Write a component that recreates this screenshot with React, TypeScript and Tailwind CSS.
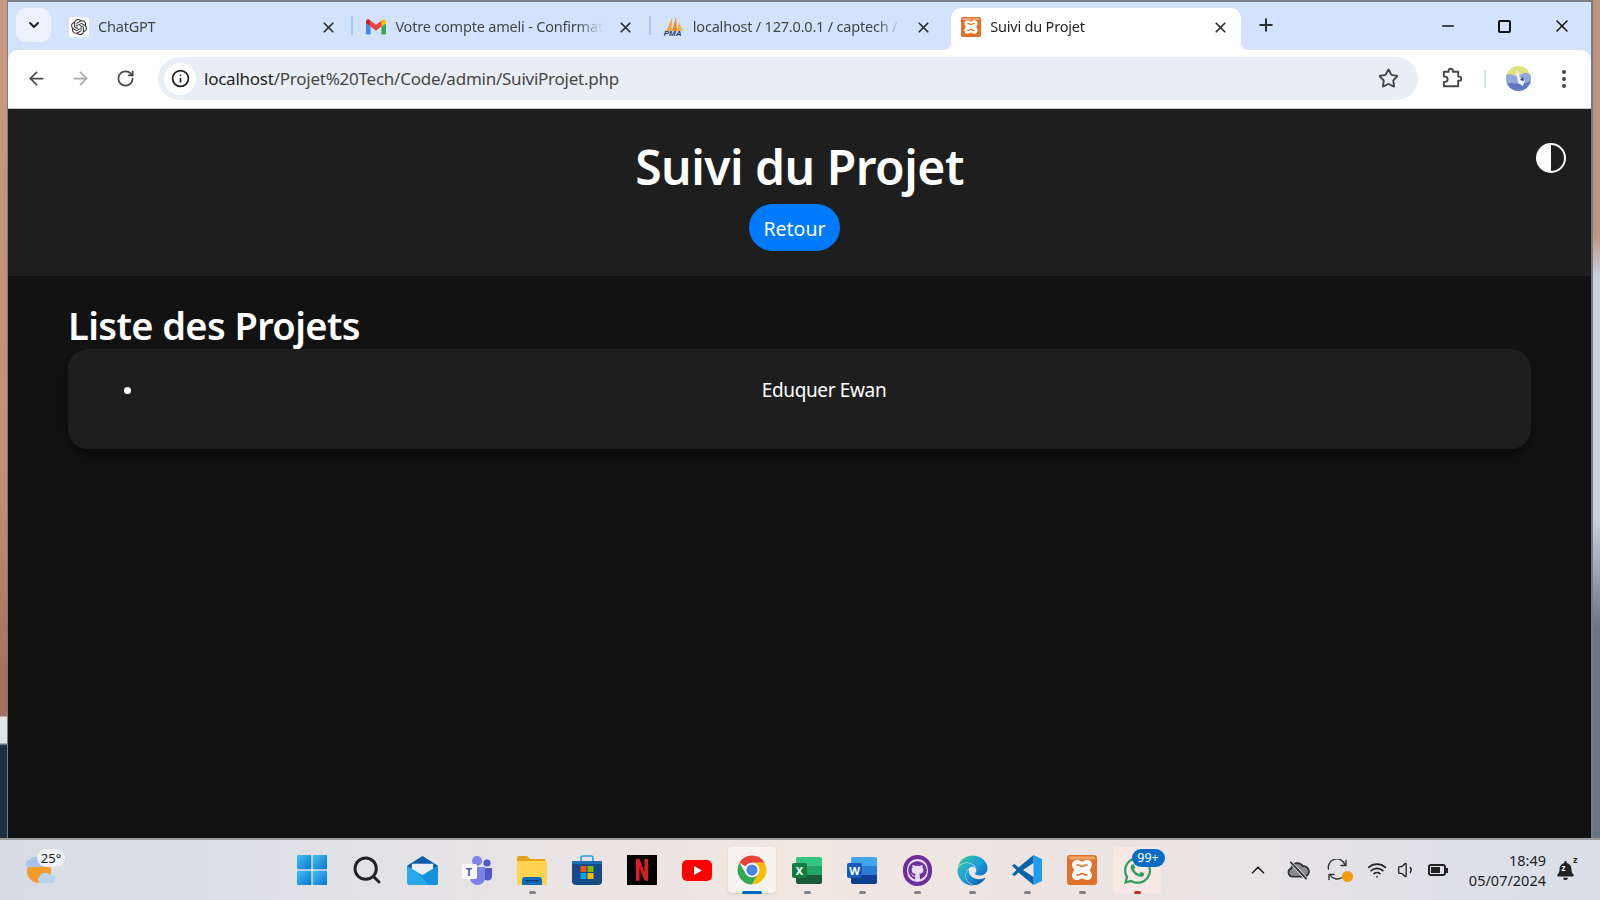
import React from "react";
import { ArrowLeft, ArrowRight, RotateCw, X, Plus, Info, Star, ChevronDown, ChevronUp, Minus, Search, Wifi, Volume1 } from "lucide-react";
import { SiOpenai } from "react-icons/si";
import { FaGithub, FaWhatsapp, FaBell, FaEdge } from "react-icons/fa";

const font = "font-['Noto_Sans',sans-serif]";

function Gmail() {
  return (
    <svg viewBox="0 0 24 18" className="w-[20px] h-[16px]">
      <path d="M1.6 18H5.5V8.5L0 4.4V16.4C0 17.3 .7 18 1.6 18Z" fill="#4285f4" />
      <path d="M18.5 18H22.4C23.3 18 24 17.3 24 16.4V4.4L18.5 8.5Z" fill="#34a853" />
      <path d="M18.5 1.4V8.5L24 4.4V2.2C24 .2 21.7-1 20.1.2Z" fill="#fbbc04" />
      <path d="M5.5 8.5V1.4L12 6.3 18.5 1.4V8.5L12 13.4Z" fill="#ea4335" />
      <path d="M0 2.2V4.4L5.5 8.5V1.4L3.9.2C2.3-1 0 .2 0 2.2Z" fill="#c5221f" />
    </svg>
  );
}

function Pma() {
  return (
    <div className="relative w-[20px] h-[20px]">
      <svg viewBox="0 0 20 15" className="w-[20px] h-[15px]">
        <path d="M2 14 8 1 7.5 14Z" fill="#f6a63a" />
        <path d="M8 14 12 0 13 14Z" fill="#ef8a1f" />
        <path d="M13 14 15 5 19 14Z" fill="#f5b45c" />
      </svg>
      <span className="absolute left-0 bottom-[-1px] text-[8px] leading-[8px] font-bold italic text-[#1b3a6b] font-['Liberation_Sans',sans-serif]">PMA</span>
    </div>
  );
}

function Xampp({ size }: { size: string }) {
  return (
    <svg viewBox="0 0 30 30" className={size}>
      <rect width="30" height="30" rx="3" fill="#e0702a" />
      <rect x="2" y="1.5" width="26" height="3" rx="1" fill="#f5a368" />
      <path d="M5 9.5A5 5 0 0 1 10 5C12.5 5 13.6 6.4 15 6.8 16.4 6.4 17.5 5 20 5A5 5 0 0 1 25 9.5C25 11.8 23.6 13.4 22.8 15 23.6 16.6 25 18.2 25 20.5A5 5 0 0 1 20 25C17.5 25 16.4 23.6 15 23.2 13.6 23.6 12.5 25 10 25A5 5 0 0 1 5 20.5C5 18.2 6.4 16.6 7.2 15 6.4 13.4 5 11.8 5 9.5Z" fill="#fff" />
      <path d="M10 10H11.5C13 10 13.5 11.5 15 11.5 16.5 11.5 17 10 18.5 10H20" fill="none" stroke="#e0702a" strokeWidth="1.7" strokeLinecap="round" />
      <path d="M10 20H11.5C13 20 13.5 18.5 15 18.5 16.5 18.5 17 20 18.5 20H20" fill="none" stroke="#e0702a" strokeWidth="1.7" strokeLinecap="round" />
    </svg>
  );
}

function Tab({ icon, title, active, sep }: { icon: React.ReactNode; title: string; active?: boolean; sep?: boolean }) {
  return (
    <div className="w-[297.4px] h-full flex items-end shrink-0">
      <div className={`w-[2px] h-[19px] mb-[15px] ${sep ? "bg-[#a8c7fa]" : ""}`} />
      <div className={`relative ml-[3px] w-[290px] h-[42px] flex items-center pl-[10px] rounded-t-[10px] pb-[4px] ${active ? "bg-white" : ""}`}>
        {active && (
          <svg viewBox="0 0 8 8" className="absolute bottom-0 left-[-8px] w-[8px] h-[8px]"><path d="M8 0V8H0C5 8 8 5 8 0Z" fill="#fff" /></svg>
        )}
        {active && (
          <svg viewBox="0 0 8 8" className="absolute bottom-0 right-[-8px] w-[8px] h-[8px]"><path d="M0 0V8H8C3 8 0 5 0 0Z" fill="#fff" /></svg>
        )}
        <div className="w-[20px] h-[20px] flex items-center justify-center shrink-0">{icon}</div>
        <div className={`ml-[9px] w-[208px] whitespace-nowrap overflow-hidden text-[14.5px] tracking-[-0.2px] [mask-image:linear-gradient(to_right,black_88%,transparent)] ${active ? "text-[#1f1f1f]" : "text-[#444746]"}`}>
          {title}
        </div>
        <X className="ml-[14px] w-[17px] h-[17px] text-[#2b2f33] shrink-0" strokeWidth={2.4} />
      </div>
    </div>
  );
}

function Puzzle() {
  return (
    <svg viewBox="0 0 24 24" className="w-[23px] h-[23px]" fill="none" stroke="#474747" strokeWidth="2" strokeLinejoin="round">
      <path d="M4 5H9V4A2.2 2.2 0 0 1 13.4 4V5H19V10H20A2.2 2.2 0 0 1 20 14.4H19V20H4V15.5H5.2A2.7 2.7 0 0 0 5.2 10H4Z" />
    </svg>
  );
}

function Chrome() {
  return (
    <svg viewBox="0 0 48 48" className="w-[30px] h-[30px]">
      <circle cx="24" cy="24" r="23" fill="#fff" />
      <path d="M24 1A23 23 0 0 1 44 12.5H24A11.5 11.5 0 0 0 13.9 18.3L4 12.5A23 23 0 0 1 24 1Z" fill="#ea4335" />
      <path d="M44 12.5A23 23 0 0 1 24 47L34 29.7A11.5 11.5 0 0 0 34 18.2 11.5 11.5 0 0 0 24 12.5Z" fill="#fbbc04" />
      <path d="M24 47A23 23 0 0 1 4 12.5L14 29.7A11.5 11.5 0 0 0 34 29.7Z" fill="#34a853" />
      <circle cx="24" cy="24" r="11.5" fill="#fff" />
      <circle cx="24" cy="24" r="9" fill="#4a86e8" />
    </svg>
  );
}

function Start() {
  return (
    <svg viewBox="0 0 30 30" className="w-[30px] h-[30px]">
      <defs>
        <linearGradient id="st" x1="0" y1="0" x2="1" y2="1"><stop offset="0" stopColor="#3fc3f5" /><stop offset="1" stopColor="#0a73cf" /></linearGradient>
      </defs>
      <rect x="0" y="0" width="14.3" height="14.3" rx="1" fill="url(#st)" />
      <rect x="15.7" y="0" width="14.3" height="14.3" rx="1" fill="url(#st)" />
      <rect x="0" y="15.7" width="14.3" height="14.3" rx="1" fill="url(#st)" />
      <rect x="15.7" y="15.7" width="14.3" height="14.3" rx="1" fill="url(#st)" />
    </svg>
  );
}

function Mail() {
  return (
    <svg viewBox="0 0 32 30" className="w-[31px] h-[29px]">
      <path d="M0 10 16 0 32 10V13H0Z" fill="#0b5cab" />
      <path d="M5 8H27V20H5Z" fill="#e8eef3" />
      <path d="M0 10 16 20 32 10V28A2 2 0 0 1 30 30H2A2 2 0 0 1 0 28Z" fill="#28a8ea" />
      <path d="M32 10V28A2 2 0 0 1 30 30H22L12 17.5 16 20Z" fill="#1490df" />
    </svg>
  );
}

function Teams() {
  return (
    <div className="relative w-[31px] h-[30px]">
      <svg viewBox="0 0 31 30" className="w-[31px] h-[30px]">
        <circle cx="15" cy="6" r="5" fill="#7b83eb" />
        <circle cx="25" cy="8" r="3.6" fill="#5059c9" />
        <path d="M21 13H30V21A4.5 4.5 0 0 1 21 21Z" fill="#5059c9" />
        <path d="M8 12H23V23A7.5 7 0 0 1 8 23Z" fill="#7b83eb" />
      </svg>
      <div className="absolute left-0 top-[9px] w-[15px] h-[15px] bg-white rounded-[2px] flex items-center justify-center text-[11px] font-bold text-[#4b53bc] leading-none">T</div>
    </div>
  );
}

function Files() {
  return (
    <svg viewBox="0 0 30 29" className="w-[30px] h-[29px]">
      <path d="M0 2A2 2 0 0 1 2 0H10L13 3H28V8H0Z" fill="#e0a31a" />
      <path d="M0 5H30V27A2 2 0 0 1 28 29H2A2 2 0 0 1 0 27Z" fill="#ffd34e" />
      <path d="M5 29V24A3 3 0 0 1 8 21H22A3 3 0 0 1 25 24V29Z" fill="#0f6cbd" />
      <rect x="8" y="24" width="14" height="1.5" fill="#0b3d73" />
    </svg>
  );
}

function Store() {
  return (
    <svg viewBox="0 0 30 30" className="w-[30px] h-[30px]">
      <path d="M9 6V3A2 2 0 0 1 11 1H19A2 2 0 0 1 21 3V6" fill="none" stroke="#27a0e0" strokeWidth="1.6" />
      <path d="M0 6H30V26A4 4 0 0 1 26 30H4A4 4 0 0 1 0 26Z" fill="#144a85" />
      <path d="M0 6H30V9H0Z" fill="#1b6fb5" />
      <rect x="8.5" y="11" width="6" height="6" fill="#f25022" />
      <rect x="15.5" y="11" width="6" height="6" fill="#7fba00" />
      <rect x="8.5" y="18" width="6" height="6" fill="#00a4ef" />
      <rect x="15.5" y="18" width="6" height="6" fill="#ffb900" />
    </svg>
  );
}

function Netflix() {
  return (
    <div className="w-[30px] h-[30px] bg-black flex items-center justify-center">
      <svg viewBox="0 0 12 22" className="w-[12px] h-[22px]">
        <path d="M0 0H3.6L8.4 13V0H12V22L8.4 21.4 3.6 9V21.6L0 22Z" fill="#d81f26" />
      </svg>
    </div>
  );
}

function Youtube() {
  return (
    <svg viewBox="0 0 30 21" className="w-[30px] h-[21px]">
      <rect width="30" height="21" rx="5" fill="#ff0000" />
      <path d="M12 6 20 10.5 12 15Z" fill="#fff" />
    </svg>
  );
}

function Office({ letter, dark, top, mid, low }: { letter: string; dark: string; top: string; mid: string; low: string }) {
  return (
    <div className="relative w-[30px] h-[27px] pl-[4px]">
      <div className="w-[26px] h-[27px] rounded-[2px] overflow-hidden flex flex-col">
        <div className={`flex-1 ${top}`} />
        <div className={`flex-1 ${mid}`} />
        <div className={`flex-1 ${low}`} />
      </div>
      <div className={`absolute left-0 top-[6px] w-[15px] h-[15px] rounded-[2px] flex items-center justify-center text-white text-[11px] font-bold leading-none ${dark}`}>{letter}</div>
    </div>
  );
}

function Github() {
  return (
    <div className="w-[29px] h-[31px] rounded-full bg-[#6e2f9e] flex items-center justify-center">
      <div className="w-[21px] h-[23px] rounded-full bg-[#eadcf2] flex items-center justify-center">
        <FaGithub className="w-[19px] h-[19px] text-[#6e2f9e]" />
      </div>
    </div>
  );
}

function Vscode() {
  return (
    <svg viewBox="0 0 30 30" className="w-[30px] h-[30px]">
      <path d="M21.5 0 30 4V26L21.5 30Z" fill="#1f9cf0" />
      <path d="M21.5 0V8L11 15 21.5 22V30L6.5 17.5 2.5 21 0 19.5 4.5 15 0 10.5 2.5 9 6.5 12.5Z" fill="#0065a9" />
    </svg>
  );
}

function Weather() {
  return (
    <svg viewBox="0 0 30 28" className="w-[30px] h-[28px]">
      <circle cx="14" cy="15" r="12" fill="#f39a2b" />
      <path d="M2 11A4 4 0 0 1 5 4 6 6 0 0 1 15 3H17V11Z" fill="#a9c4e8" />
      <path d="M15 27A4 4 0 0 1 15 20 6 6 0 0 1 25 19 4 4 0 0 1 28 27Z" fill="#bcd3ef" />
    </svg>
  );
}

function CloudSlash() {
  return (
    <svg viewBox="0 0 24 20" className="w-[23px] h-[20px]" fill="none" stroke="#333" strokeWidth="1.9" strokeLinecap="round">
      <path d="M6 17A4.5 4.5 0 0 1 4.5 8.3 6.5 6.5 0 0 1 16.5 6 5.5 5.5 0 0 1 18 17Z" fill="#8a8d92" />
      <path d="M5 3 20 19" stroke="#dfe2e8" strokeWidth="3.5" />
      <path d="M4 2 20 19" />
    </svg>
  );
}

function Sync() {
  return (
    <div className="relative w-[22px] h-[22px]">
      <svg viewBox="0 0 22 22" className="w-[22px] h-[22px]" fill="none" stroke="#333" strokeWidth="1.4" strokeLinecap="round" strokeLinejoin="round">
        <path d="M1.5 10A8.5 8.5 0 0 1 18 6" />
        <path d="M19 1.5V6.5H14" />
        <path d="M15 18.5A8.5 8.5 0 0 1 3 16" />
        <path d="M2 20.5V15.5H7" />
      </svg>
      <div className="absolute right-[-4px] bottom-[-1px] w-[11px] h-[11px] rounded-full bg-[#f59a0c]" />
    </div>
  );
}

function Cell({ children, bar, box }: { children: React.ReactNode; bar?: string; box?: string }) {
  return (
    <div className="relative w-[55px] h-full flex items-center justify-center shrink-0">
      {box && <div className={`absolute top-[7px] h-[46px] w-[48px] rounded-[4px] ${box}`} />}
      <div className="relative">{children}</div>
      {bar && <div className={`absolute bottom-[6px] h-[3px] rounded-full ${bar}`} />}
    </div>
  );
}

const DOT = "w-[7px] bg-[#80838a]";

export default function App() {
  return (
    <div className={`w-[1600px] h-[900px] flex flex-col overflow-hidden bg-[#c08c78] ${font}`}>
      <svg className="absolute w-0 h-0">
        <defs>
          <linearGradient id="edge" x1="0" y1="0" x2="1" y2="1">
            <stop offset="0" stopColor="#3ccf8e" />
            <stop offset="0.5" stopColor="#1b9de2" />
            <stop offset="1" stopColor="#0b4f9e" />
          </linearGradient>
        </defs>
      </svg>
      <div className="h-[838px] flex">
        <div className="w-[8px] border-r-[1px] border-[#7b7b7b] bg-[linear-gradient(180deg,#c89a84_0%,#c08c78_60%,#a8705f_80%,#a8705f_85.4%,#dfe3ea_85.6%,#dfe3ea_88.6%,#1d2f42_89%,#1d2f42_100%)]" />
        <div className="flex-1 flex flex-col min-w-0">
          {/* Tab strip */}
          <div className="h-[50px] bg-[#d3e3fd] border-t-[2px] border-[#7b7f85] flex pl-[8px] shrink-0">
            <div className="w-[35px] h-[34px] mt-[6px] rounded-[10px] bg-[#ecf3fe] flex items-center justify-center mr-[3px]">
              <ChevronDown className="w-[16px] h-[16px] text-[#1f1f1f]" strokeWidth={3} />
            </div>
            <Tab title="ChatGPT" icon={<div className="w-[20px] h-[20px] rounded-[3px] bg-white flex items-center justify-center"><SiOpenai className="w-[16px] h-[16px] text-[#333]" /></div>} />
            <Tab sep title="Votre compte ameli - Confirmat" icon={<Gmail />} />
            <Tab sep title="localhost / 127.0.0.1 / captech /" icon={<Pma />} />
            <Tab active title="Suivi du Projet" icon={<Xampp size="w-[20px] h-[20px]" />} />
            <div className="ml-[2px] w-[40px] h-[46px] flex items-center justify-center">
              <Plus className="w-[20px] h-[20px] text-[#2b2f33]" strokeWidth={2.4} />
            </div>
            <div className="ml-auto flex">
              <div className="w-[56px] h-[48px] flex items-center justify-center"><Minus className="w-[18px] h-[18px] text-[#111]" strokeWidth={2} /></div>
              <div className="w-[56px] h-[48px] flex items-center justify-center"><div className="w-[13px] h-[13px] rounded-[2px] border-[2px] border-[#111]" /></div>
              <div className="w-[59px] h-[48px] flex items-center justify-center"><X className="w-[20px] h-[20px] text-[#111]" strokeWidth={1.8} /></div>
            </div>
          </div>
          {/* Toolbar */}
          <div className="h-[59px] bg-[#d3e3fd] shrink-0">
            <div className="h-[59px] bg-white rounded-t-[10px] border-b-[1px] border-[#c7c7c7] flex items-center pb-[1px]">
              <div className="w-[44px] ml-[6px] flex justify-center"><ArrowLeft className="w-[21px] h-[21px] text-[#474747]" strokeWidth={2} /></div>
              <div className="w-[44px] flex justify-center"><ArrowRight className="w-[21px] h-[21px] text-[#a8abae]" strokeWidth={2} /></div>
              <div className="w-[44px] flex justify-center pl-[2px]"><RotateCw className="w-[19px] h-[19px] text-[#474747]" strokeWidth={2.2} /></div>
              <div className="ml-[12px] w-[1260px] h-[43px] rounded-full bg-[#e9eef6] flex items-center pl-[6px]">
                <div className="w-[32px] h-[32px] rounded-full bg-white flex items-center justify-center">
                  <Info className="w-[19px] h-[19px] text-[#1f1f1f]" strokeWidth={2.2} />
                </div>
                <div className="ml-[8px] text-[17px] tracking-[-0.24px] text-[#474747] whitespace-nowrap">
                  <span className="text-[#1f1f1f]">localhost</span>/Projet%20Tech/Code/admin/SuiviProjet.php
                </div>
                <div className="ml-auto mr-[19px]"><Star className="w-[21px] h-[21px] text-[#474747]" strokeWidth={2.2} /></div>
              </div>
              <div className="ml-[22px] w-[23px] flex justify-center"><Puzzle /></div>
              <div className="ml-[21px] w-[2px] h-[18px] bg-[#d3e3fd]" />
              <div className="ml-[20px] w-[25px] h-[25px] rounded-full overflow-hidden">
                <svg viewBox="0 0 25 25" className="w-[25px] h-[25px]">
                  <rect width="25" height="25" fill="#dfe37e" />
                  <path d="M0 9C6 6 9 12 14 9S22 7 25 9V25H0Z" fill="#8fa8dd" />
                  <path d="M0 18C6 15 12 21 25 15V25H0Z" fill="#5f78c4" />
                  <path d="M10 5 12 17 17 20 19 14 14 12 12 5Z" fill="#f0eef6" />
                  <path d="M14 14 17 11 18 15Z" fill="#3a3f6b" />
                </svg>
              </div>
              <div className="ml-[31px] flex flex-col gap-[3px]">
                <div className="w-[4px] h-[4px] rounded-full bg-[#474747]" />
                <div className="w-[4px] h-[4px] rounded-full bg-[#474747]" />
                <div className="w-[4px] h-[4px] rounded-full bg-[#474747]" />
              </div>
            </div>
          </div>
          {/* Page */}
          <div className="flex-1 bg-[#121212] text-white flex flex-col min-h-0">
            <header className="relative h-[167px] bg-[#1e1e1e] flex flex-col items-center shrink-0">
              <h1 className="mt-[21px] h-[74px] text-[48px] tracking-[-0.5px] leading-[73px] font-semibold">Suivi du Projet</h1>
              <button className="w-[91px] h-[47px] rounded-[25px] bg-[#007bff] text-[19.5px] pt-[2px] text-white mr-[10px]">Retour</button>
              <div className="absolute right-[25px] top-[34px] w-[30px] h-[30px] rounded-full bg-white flex justify-end overflow-hidden p-[2px]">
                <div className="w-[13px] h-full bg-[#1e1e1e] rounded-r-full" />
              </div>
            </header>
            <main className="px-[60px] pt-[26px]">
              <h2 className="h-[47px] text-[38px] tracking-[-0.6px] leading-[47px] font-semibold">Liste des Projets</h2>
              <div className="h-[100px] rounded-[20px] bg-[#1e1e1e] shadow-[0_4px_12px_rgba(0,0,0,0.5)] pl-[76px] pr-[27px] pt-[26px]">
                <ul className="list-disc">
                  <li className="text-center text-[19px] tracking-[-0.35px] leading-[30px]">Eduquer Ewan</li>
                </ul>
              </div>
            </main>
          </div>
        </div>
        <div className="w-[9px] border-l-[2px] border-[#7b7b7b] bg-[linear-gradient(180deg,#bd9583_0%,#bd9583_28%,#c9d0e0_33%,#c9d0e0_62%,#66758a_75%,#66758a_100%)]" />
      </div>
      {/* Taskbar */}
      <div className="h-[62px] border-t-[2px] border-[#9a9a9c] bg-[linear-gradient(90deg,#d6dce6_0%,#e4e2e6_25%,#f2e6e0_50%,#ebe4e4_72%,#d9dee8_100%)] flex">
        <div className="w-[284.5px] h-full pl-[25px] flex items-center shrink-0">
          <div className="relative">
            <Weather />
            <div className="absolute left-[12px] top-[-7px] w-[28px] h-[18px] rounded-full bg-[#eef1f5] text-[13px] leading-[18px] text-center text-[#222]">25°</div>
          </div>
        </div>
        <Cell><Start /></Cell>
        <Cell><Search className="w-[32px] h-[32px] text-[#222]" strokeWidth={2.2} /></Cell>
        <Cell><Mail /></Cell>
        <Cell><Teams /></Cell>
        <Cell bar={DOT}><Files /></Cell>
        <Cell><Store /></Cell>
        <Cell><Netflix /></Cell>
        <Cell><Youtube /></Cell>
        <Cell bar="w-[20px] bg-[#0067c0]" box="bg-[#f8f3f0] shadow-[0_1px_2px_rgba(0,0,0,0.12)]"><Chrome /></Cell>
        <Cell bar={DOT}><Office letter="X" dark="bg-[#107c41]" top="bg-[#33c481]" mid="bg-[#21a366]" low="bg-[#185c37]" /></Cell>
        <Cell bar={DOT}><Office letter="W" dark="bg-[#185abd]" top="bg-[#41a5ee]" mid="bg-[#2b7cd3]" low="bg-[#103f91]" /></Cell>
        <Cell bar={DOT}><Github /></Cell>
        <Cell bar={DOT}><FaEdge className="w-[31px] h-[31px] fill-[url(#edge)]" /></Cell>
        <Cell bar={DOT}><Vscode /></Cell>
        <Cell bar={DOT}><Xampp size="w-[30px] h-[30px]" /></Cell>
        <Cell bar="w-[7px] bg-[#c42b1c]" box="bg-[#f8e9e7]">
          <FaWhatsapp className="w-[31px] h-[31px] text-[#2f9e5f]" />
          <div className="absolute left-[10px] top-[-6px] w-[33px] h-[18px] rounded-full bg-[#0a6cc4] text-white text-[12.5px] leading-[18px] text-center">99+</div>
        </Cell>
        <div className="ml-[73.5px] flex h-full items-center text-[#222]">
          <div className="w-[40px] flex justify-center"><ChevronUp className="w-[22px] h-[22px]" strokeWidth={1.8} /></div>
          <div className="w-[40px] flex justify-center"><CloudSlash /></div>
          <div className="w-[40px] flex justify-center"><Sync /></div>
          <div className="w-[38px] flex justify-center"><Wifi className="w-[20px] h-[20px]" strokeWidth={2} /></div>
          <div className="w-[22px] flex justify-center"><Volume1 className="w-[20px] h-[20px]" strokeWidth={1.6} /></div>
          <div className="w-[40px] flex justify-center">
            <div className="flex items-center">
              <div className="w-[18px] h-[12px] rounded-[3px] border-[2px] border-[#222] p-[1px]"><div className="w-[9px] h-full bg-[#222]" /></div>
              <div className="w-[2px] h-[5px] bg-[#222]" />
            </div>
          </div>
          <div className="w-[88px] text-right text-[14.5px] leading-[20px] text-[#222]">
            <div>18:49</div>
            <div>05/07/2024</div>
          </div>
          <div className="w-[38px] flex justify-center">
            <div className="relative">
              <FaBell className="w-[17px] h-[19px] text-[#222]" />
              <span className="absolute left-[5px] top-[3px] text-[8px] font-bold leading-none text-white">z</span>
              <span className="absolute right-[-4px] top-[-6px] text-[9px] font-bold leading-none">z</span>
            </div>
          </div>
        </div>
      </div>
    </div>
  );
}
